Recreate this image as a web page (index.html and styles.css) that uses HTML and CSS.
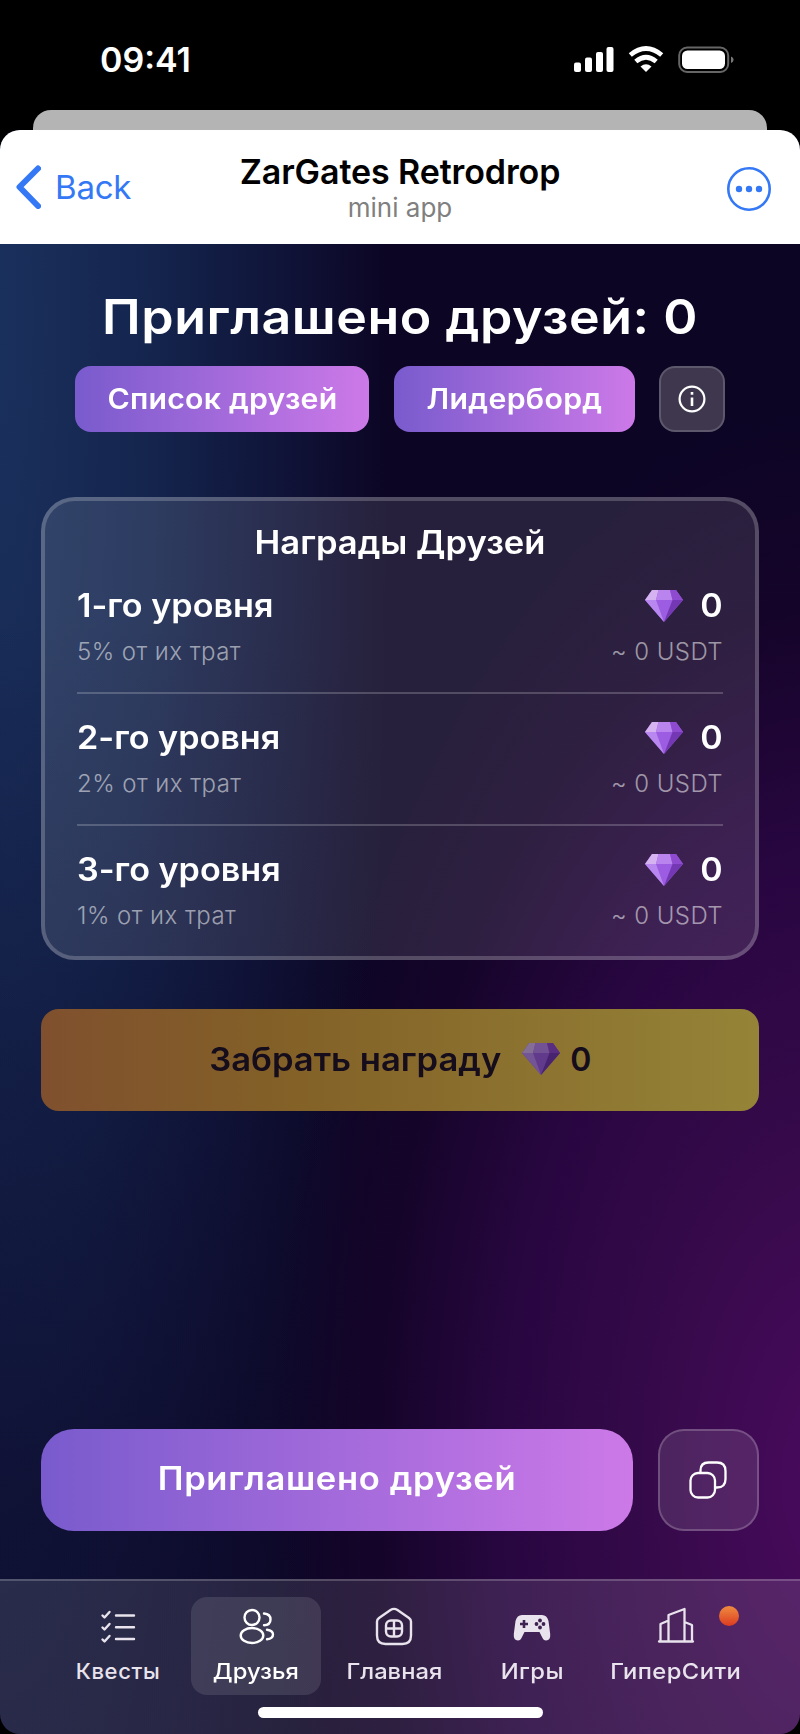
FILE: index.html
```html
<!DOCTYPE html>
<html lang="ru">
<head>
<meta charset="utf-8">
<title>ZarGates Retrodrop</title>
<link rel="stylesheet" href="styles.css">
</head>
<body>
<svg class="defs" width="0" height="0">
  <symbol id="gem" viewBox="0 0 38 32">
    <path d="M7 0H31L38 10L19 32L0 10Z" fill="#9c5de2"/>
    <path d="M7 0H13.500L11 10H0Z" fill="#d5b2f0"/>
    <path d="M13.500 0H25L27.500 10H11Z" fill="#b984ee"/>
    <path d="M25 0H31L38 10H27.500Z" fill="#8f4bd0"/>
    <path d="M0 10H11L19 32Z" fill="#b987f0"/>
    <path d="M27.500 10H38L19 32Z" fill="#7438b4"/>
  </symbol>
</svg>
<div class="phone">
  <div class="status">
    <span class="time">09:41</span>
    <svg class="status-icons" width="160" height="28" viewBox="0 0 160 28">
      <g fill="#fff">
        <rect x="0" y="16.500" width="7" height="9.500" rx="2"/>
        <rect x="11" y="11.500" width="7" height="14.500" rx="2"/>
        <rect x="22" y="6" width="7" height="20" rx="2"/>
        <rect x="32.500" y="1" width="7" height="25" rx="2"/>
        <path d="M72 26L66.500 20.500Q72 16 77.500 20.500Z"/>
      </g>
      <g fill="none" stroke="#fff" stroke-width="4.800">
        <path d="M56.300 9Q72 -4 87.700 9"/>
        <path d="M61.800 15.500Q72 7 82.200 15.500"/>
      </g>
      <rect x="105.200" y="1.500" width="49" height="24.500" rx="8" fill="none" stroke="#666" stroke-width="2"/>
      <rect x="108" y="4.500" width="43" height="18.500" rx="5.500" fill="#fff"/>
      <path d="M157 10.500Q159.600 11.500 159.600 13.700T157 17Z" fill="#777"/>
    </svg>
  </div>
  <div class="back-sheet"></div>
  <div class="sheet">
    <header class="topbar">
      <a class="back">
        <svg width="26" height="44" viewBox="0 0 26 44"><path d="M23 3.500L4.500 22L23 41" fill="none" stroke="#3478f6" stroke-width="6" stroke-linecap="round" stroke-linejoin="round"/></svg>
        <span>Back</span>
      </a>
      <div class="heading">
        <div class="app-name">ZarGates Retrodrop</div>
        <div class="app-kind">mini app</div>
      </div>
      <svg class="more" width="44" height="44" viewBox="0 0 44 44"><circle cx="22" cy="22" r="20.700" fill="none" stroke="#3478f6" stroke-width="2.600"/><g fill="#3478f6"><circle cx="12" cy="22" r="3.200"/><circle cx="22" cy="22" r="3.200"/><circle cx="32" cy="22" r="3.200"/></g></svg>
    </header>
    <main class="app">
      <h1 class="title wide">Приглашено друзей: 0</h1>
      <div class="actions">
        <button class="pill friends"><span class="wide">Список друзей</span></button>
        <button class="pill leaders"><span class="wide">Лидерборд</span></button>
        <button class="info"><svg width="28" height="28" viewBox="0 0 28 28"><circle cx="14" cy="14" r="12.400" fill="none" stroke="#fff" stroke-width="2.200"/><path d="M14 12.500V21M14 7V9.800" stroke="#fff" stroke-width="2.600"/></svg></button>
      </div>
      <section class="card">
        <h2 class="card-title wide">Награды Друзей</h2>
        <div class="row">
          <div class="line"><span class="level">1-го уровня</span><span class="amount"><svg width="38" height="32"><use href="#gem"/></svg><span class="num">0</span></span></div>
          <div class="sub"><span>5% от их трат</span><span class="usdt">~ 0 USDT</span></div>
        </div>
        <div class="row">
          <div class="line"><span class="level">2-го уровня</span><span class="amount"><svg width="38" height="32"><use href="#gem"/></svg><span class="num">0</span></span></div>
          <div class="sub"><span>2% от их трат</span><span class="usdt">~ 0 USDT</span></div>
        </div>
        <div class="row">
          <div class="line"><span class="level">3-го уровня</span><span class="amount"><svg width="38" height="32"><use href="#gem"/></svg><span class="num">0</span></span></div>
          <div class="sub"><span>1% от их трат</span><span class="usdt">~ 0 USDT</span></div>
        </div>
      </section>
      <button class="claim"><span class="claim-text wide">Забрать награду</span><svg width="38" height="32"><use href="#gem"/></svg><span>0</span></button>
      <div class="bottom">
        <button class="invite"><span class="wide">Приглашено друзей</span></button>
        <button class="copy"><svg width="38" height="38" viewBox="0 0 38 38" fill="none" stroke="#fff" stroke-width="2.300"><rect x="1.500" y="12" width="24.500" height="24.500" rx="7.500"/><path d="M11.500 12V9.500Q11.500 1.500 19.500 1.500H28Q36.500 1.500 36.500 10V18Q36.500 26.500 28 26.500H26"/></svg></button>
      </div>
    </main>
    <nav class="nav">
      <div class="tabs">
        <div class="tab quests">
          <svg width="40" height="40" viewBox="0 0 40 40" fill="none" stroke="#e8e3ec" stroke-width="2.400" stroke-linecap="round" stroke-linejoin="round"><path d="M18 8.500H36M18 20.300H36M18 32H36M4.500 8.500L6.500 10.500L11.500 5M4.500 20.500L6.500 22.500L11.500 17M4.500 32.500L6.500 34.500L11.500 29"/></svg>
          <span>Квесты</span>
        </div>
        <div class="tab active">
          <svg width="40" height="40" viewBox="0 0 40 40" fill="none" stroke="#fff" stroke-width="2.400" stroke-linecap="round"><circle cx="16" cy="10.500" r="7.500"/><ellipse cx="16" cy="28.500" rx="11.300" ry="7.500"/><path d="M28 6.500Q34.500 7 34.500 12.500T28 18.300M31 22.700Q37 23.500 37 27.500T31 32.300"/></svg>
          <span class="wide">Друзья</span>
        </div>
        <div class="tab">
          <svg width="40" height="40" viewBox="0 0 40 40" fill="none" stroke="#e8e3ec" stroke-width="2.400" stroke-linejoin="round"><path d="M3 14.500Q3 12.500 5 11L16.500 3Q20 .7 23.500 3L35 11Q37 12.500 37 14.500V28.500Q37 37 28.500 37H11.500Q3 37 3 28.500Z"/><rect x="12" y="13.500" width="16" height="16" rx="5"/><path d="M20 13.500V29.500M12 21.500H28"/></svg>
          <span class="wide">Главная</span>
        </div>
        <div class="tab games">
          <svg width="40" height="40" viewBox="0 0 40 40"><path d="M10 8H30Q35 8 36.500 14L38.200 27Q38.700 33.500 34 33.500Q31.500 33.500 30 30L27.500 25H12.500L10 30Q8.500 33.500 6 33.500Q1.300 33.500 1.800 27L3.500 14Q5 8 10 8Z" fill="#e8e3ec"/><g fill="#3d2251"><path d="M10.700 13H13.300V15.700H16V18.300H13.300V21H10.700V18.300H8V15.700H10.700Z"/><circle cx="28" cy="13.500" r="1.900"/><circle cx="28" cy="20.500" r="1.900"/><circle cx="24.500" cy="17" r="1.900"/><circle cx="31.500" cy="17" r="1.900"/></g></svg>
          <span class="wide">Игры</span>
        </div>
        <div class="tab city">
          <svg width="40" height="40" viewBox="0 0 40 40" fill="none" stroke="#e8e3ec" stroke-width="2.300" stroke-linecap="round" stroke-linejoin="round"><path d="M3 34.500H37M12.500 34V8L28.500 2V34M4.500 34V17L12.500 13.500M28.500 15L36 18V34"/></svg>
          <span class="wide">ГиперСити</span>
          <i class="badge"></i>
        </div>
      </div>
      <div class="home"></div>
    </nav>
  </div>
</div>
</body>
</html>
```
FILE: styles.css
```css
* { box-sizing: border-box; }
body { margin: 0; background: #000; font-family: Inter, "Noto Sans", sans-serif; }
h1, h2 { margin: 0; font-weight: 600; }
button { border: 0; margin: 0; padding: 0; background: none; color: #fff; font: inherit; display: flex; align-items: center; justify-content: center; white-space: nowrap; }
svg { display: block; flex: none; }
.defs { position: absolute; }
/* Extended letterforms for the mini app's labels */
.wide { transform: scaleX(1.08); }
.phone { width: 800px; height: 1734px; display: flex; flex-direction: column; overflow: hidden; }
.status { height: 110px; padding: 0 66px 0 100px; display: flex; justify-content: space-between; }
.time { color: #fff; font-size: 34px; font-weight: 600; line-height: 119px; }
.status-icons { margin-top: 46px; }
.back-sheet { height: 20px; margin: 0 33px; background: #b4b4b4; border-radius: 18px 18px 0 0; }
.sheet { flex: 1; display: flex; flex-direction: column; border-radius: 20px; overflow: hidden;
  background:
    radial-gradient(ellipse 560px 1080px at 830px 1350px, #4a0a5e 0%, #370a4b 30%, #280640 58%, rgba(24, 4, 44, .8) 80%, rgba(12, 5, 36, 0) 100%),
    linear-gradient(rgba(12, 5, 36, 0) 30%, rgba(12, 5, 36, .55) 85%),
    radial-gradient(ellipse 390px 2700px at 0 190px, #1a305c 0%, #14244d 40%, #10153a 70%, #0c0524 100%),
    #0c0524; }
.topbar { height: 114px; background: #fff; display: grid; grid-template-columns: 220px 1fr 220px; align-items: start; }
.back { display: flex; align-items: center; gap: 14px; height: 114px; padding-left: 15px; color: #3478f6; font-size: 33px; letter-spacing: -.2px; }
.heading { text-align: center; padding-top: 22px; white-space: nowrap; }
.app-name { font-size: 34px; font-weight: 600; line-height: 40px; letter-spacing: -.1px; color: #000; }
.app-kind { font-size: 26px; line-height: 32px; color: #808080; }
.more { justify-self: end; margin: 37px 29px 0 0; }
.app { height: 1335px; padding: 43px 41px 0; color: #fff; display: flex; flex-direction: column; }
.title { font-size: 48px; line-height: 60px; text-align: center; white-space: nowrap; letter-spacing: .5px; }
.actions { display: flex; gap: 24.500px; margin: 19px 34px 65px; }
.pill { height: 66px; border-radius: 16px; background: linear-gradient(90deg, #795bcd, #cd79e8); font-size: 28px; font-weight: 600; }
.friends { width: 295px; letter-spacing: .2px; }
.leaders { width: 242px; letter-spacing: .3px; }
.info { width: 66px; height: 66px; border-radius: 16px; background: #3e374e; border: 2px solid #5e586c; }
.card { height: 463px; border: 4px solid rgba(255, 255, 255, .2); border-radius: 34px; background: rgba(255, 255, 255, .11); padding: 21px 32px 0; }
.card-title { font-size: 32px; line-height: 41px; text-align: center; }
.row { height: 132px; padding-top: 23px; border-bottom: 2px solid rgba(255, 255, 255, .2); display: flex; flex-direction: column; gap: 10px; }
.card-title + .row { height: 131px; padding-top: 22px; }
.row:last-child { border-bottom: 0; }
.line, .sub { display: flex; justify-content: space-between; white-space: nowrap; }
.line { font-size: 32px; font-weight: 600; line-height: 41px; }
.level { transform: scaleX(1.067); transform-origin: left; }
.amount { display: flex; align-items: center; gap: 18px; padding-right: 1px; }
.num { transform: scaleX(1.06); }
.sub { font-size: 24px; font-weight: 300; line-height: 32px; letter-spacing: .45px; color: rgba(255, 255, 255, .55); }
.claim { height: 102px; margin-top: 49px; border-radius: 18px; background: linear-gradient(90deg, #80502e, #836127 35%, #958438); color: #150c1c; font-size: 32px; font-weight: 600; padding-bottom: 2px; }
.claim-text { margin: 0 32px 0 11px; }
.claim svg { margin-right: 10px; filter: brightness(.62); }
.bottom { display: flex; gap: 24.500px; margin-top: 318px; }
.invite { width: 592px; height: 102px; border-radius: 33px; background: linear-gradient(90deg, #795bcd, #cd79e8); font-size: 32px; font-weight: 600; letter-spacing: .6px; padding-bottom: 3px; }
.copy { width: 101px; height: 102px; border-radius: 26px; background: rgba(255, 255, 255, .11); border: 2px solid rgba(255, 255, 255, .2); }
.nav { flex: 1; border-top: 2px solid rgba(255, 255, 255, .2); background: rgba(255, 255, 255, .11); padding-top: 16px; }
.tabs { display: flex; gap: 8px; padding-left: 53px; }
.tab { position: relative; width: 130px; height: 98px; border-radius: 16px; padding-top: 10px; display: flex; flex-direction: column; align-items: center; gap: 9px; font-size: 22px; font-weight: 500; line-height: 30px; color: #e8e3ec; white-space: nowrap; }
.quests { letter-spacing: .6px; }
.games { letter-spacing: .4px; }
.active { background: rgba(255, 255, 255, .11); color: #fff; }
.city { width: 142px; letter-spacing: .4px; }
.badge { position: absolute; right: 8px; top: 9px; width: 20px; height: 20px; border-radius: 50%; background: linear-gradient(#ef8c40, #dc3b20); }
.home { width: 285px; height: 11px; margin: 12px 0 0 258px; border-radius: 6px; background: #fff; }
```
